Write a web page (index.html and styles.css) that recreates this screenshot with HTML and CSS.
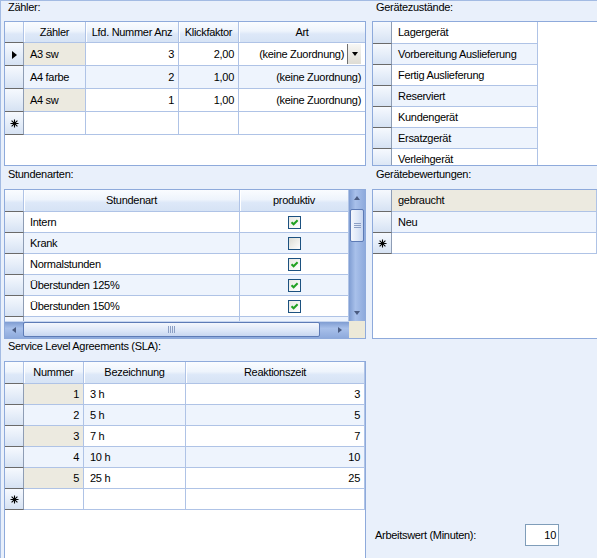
FILE: index.html
```html
<!DOCTYPE html>
<html lang="de">
<head>
<meta charset="utf-8">
<title>Einstellungen</title>
<link rel="stylesheet" href="styles.css">
</head>
<body>
<div class="page">

  <section class="sec sec-r1">
    <div class="label">Zähler:</div>
    <div class="box box-zaehler">
      <table class="grid">
        <colgroup><col class="w19"><col class="w62"><col class="w93"><col class="w60"><col class="w126"></colgroup>
        <tr class="hdr h21"><th class="corner-h"></th><th>Zähler</th><th>Lfd. Nummer Anz</th><th>Klickfaktor</th><th class="last">Art</th></tr>
        <tr class="h23"><td class="rh"><span class="cur"></span></td><td class="ro">A3 sw</td><td class="num">3</td><td class="num">2,00</td><td class="last combo-cell"><div class="combo"><span>(keine Zuordnung)</span><span class="dd"><span class="dd-arrow"></span></span></div></td></tr>
        <tr class="h23 alt"><td class="rh"></td><td>A4 farbe</td><td class="num">2</td><td class="num">1,00</td><td class="num last">(keine Zuordnung)</td></tr>
        <tr class="h23"><td class="rh"></td><td class="ro">A4 sw</td><td class="num">1</td><td class="num">1,00</td><td class="num last">(keine Zuordnung)</td></tr>
        <tr class="h23"><td class="rh"><svg class="star" width="9" height="9" viewBox="0 0 9 9"><path d="M4.5 0.5V8.5M0.5 4.5H8.5M1.6 1.6L7.4 7.4M7.4 1.6L1.6 7.4" stroke="#000" stroke-width="1.1"/></svg></td><td></td><td></td><td></td><td class="last"></td></tr>
      </table>
    </div>
  </section>

  <section class="sec sec-r1">
    <div class="label">Gerätezustände:</div>
    <div class="box box-open">
      <table class="grid grid-full">
        <colgroup><col class="w19"><col class="w146"><col></colgroup>
        <tr class="h22"><td class="rh"></td><td>Lagergerät</td><td class="fill"></td></tr>
        <tr class="h21 alt"><td class="rh"></td><td>Vorbereitung Auslieferung</td><td class="fill"></td></tr>
        <tr class="h21"><td class="rh"></td><td>Fertig Auslieferung</td><td class="fill"></td></tr>
        <tr class="h21 alt"><td class="rh"></td><td>Reserviert</td><td class="fill"></td></tr>
        <tr class="h21"><td class="rh"></td><td>Kundengerät</td><td class="fill"></td></tr>
        <tr class="h21 alt"><td class="rh"></td><td>Ersatzgerät</td><td class="fill"></td></tr>
        <tr class="h21"><td class="rh"></td><td>Verleihgerät</td><td class="fill"></td></tr>
      </table>
    </div>
  </section>

  <section class="sec sec-r2">
    <div class="label">Stundenarten:</div>
    <div class="box sbox">
      <div class="sview">
        <table class="grid">
          <colgroup><col class="w19"><col class="w216"><col class="w109"></colgroup>
          <tr class="hdr h22"><th class="corner-h"></th><th>Stundenart</th><th>produktiv</th></tr>
          <tr class="h21"><td class="rh"></td><td>Intern</td><td class="ctr"><span class="cb on"><svg width="11" height="11" viewBox="0 0 11 11"><path d="M2.5 5.2L4.6 7.3L8.6 3.2" fill="none" stroke="#21A121" stroke-width="2"/></svg></span></td></tr>
          <tr class="h21 alt"><td class="rh"></td><td>Krank</td><td class="ctr"><span class="cb off"></span></td></tr>
          <tr class="h21"><td class="rh"></td><td>Normalstunden</td><td class="ctr"><span class="cb on"><svg width="11" height="11" viewBox="0 0 11 11"><path d="M2.5 5.2L4.6 7.3L8.6 3.2" fill="none" stroke="#21A121" stroke-width="2"/></svg></span></td></tr>
          <tr class="h21 alt"><td class="rh"></td><td>Überstunden 125%</td><td class="ctr"><span class="cb on"><svg width="11" height="11" viewBox="0 0 11 11"><path d="M2.5 5.2L4.6 7.3L8.6 3.2" fill="none" stroke="#21A121" stroke-width="2"/></svg></span></td></tr>
          <tr class="h21"><td class="rh"></td><td>Überstunden 150%</td><td class="ctr"><span class="cb on"><svg width="11" height="11" viewBox="0 0 11 11"><path d="M2.5 5.2L4.6 7.3L8.6 3.2" fill="none" stroke="#21A121" stroke-width="2"/></svg></span></td></tr>
          <tr class="h21 alt"><td class="rh"></td><td></td><td></td></tr>
        </table>
      </div>
      <div class="vscroll">
        <div class="sarrow"><span class="tri-up"></span></div>
        <div class="vthumb"><span class="grip-h"></span></div>
        <div class="vtrack"></div>
        <div class="sarrow"><span class="tri-down"></span></div>
      </div>
      <div class="hscroll">
        <div class="harrow"><span class="tri-left"></span></div>
        <div class="hthumb"><span class="grip-v"></span></div>
        <div class="htrack"></div>
        <div class="harrow"><span class="tri-right"></span></div>
      </div>
      <div class="scorner"></div>
    </div>
  </section>

  <section class="sec sec-r2">
    <div class="label">Gerätebewertungen:</div>
    <div class="box box-open box-r2">
      <table class="grid grid-full">
        <colgroup><col class="w19"><col></colgroup>
        <tr class="h22"><td class="rh"></td><td class="ro">gebraucht</td></tr>
        <tr class="h21 alt"><td class="rh"></td><td>Neu</td></tr>
        <tr class="h21"><td class="rh"><svg class="star" width="9" height="9" viewBox="0 0 9 9"><path d="M4.5 0.5V8.5M0.5 4.5H8.5M1.6 1.6L7.4 7.4M7.4 1.6L1.6 7.4" stroke="#000" stroke-width="1.1"/></svg></td><td></td></tr>
      </table>
    </div>
  </section>

  <section class="sec sec-r3">
    <div class="label">Service Level Agreements (SLA):</div>
    <div class="box box-sla">
      <table class="grid">
        <colgroup><col class="w19"><col class="w60"><col class="w102"><col class="w179"></colgroup>
        <tr class="hdr h22"><th class="corner-h"></th><th>Nummer</th><th>Bezeichnung</th><th>Reaktionszeit</th></tr>
        <tr class="h21"><td class="rh"></td><td class="num ro">1</td><td>3 h</td><td class="num">3</td></tr>
        <tr class="h21 alt"><td class="rh"></td><td class="num">2</td><td>5 h</td><td class="num">5</td></tr>
        <tr class="h21"><td class="rh"></td><td class="num ro">3</td><td>7 h</td><td class="num">7</td></tr>
        <tr class="h21 alt"><td class="rh"></td><td class="num">4</td><td>10 h</td><td class="num">10</td></tr>
        <tr class="h21"><td class="rh"></td><td class="num ro">5</td><td>25 h</td><td class="num">25</td></tr>
        <tr class="h21"><td class="rh"><svg class="star" width="9" height="9" viewBox="0 0 9 9"><path d="M4.5 0.5V8.5M0.5 4.5H8.5M1.6 1.6L7.4 7.4M7.4 1.6L1.6 7.4" stroke="#000" stroke-width="1.1"/></svg></td><td></td><td></td><td></td></tr>
      </table>
    </div>
  </section>

  <section class="sec sec-r3 sec-arbeit">
    <div class="field">
      <span class="field-label">Arbeitswert (Minuten):</span>
      <span class="input">10</span>
    </div>
  </section>

</div>
</body>
</html>
```

FILE: styles.css
```css
* { box-sizing: border-box; }
html, body { margin: 0; padding: 0; }
body {
  width: 597px;
  height: 558px;
  overflow: hidden;
  background: #E9F0FB;
  font-family: "Liberation Sans", Arial, sans-serif;
  font-size: 11px;
  letter-spacing: -0.3px;
  color: #000;
}
.page {
  height: 558px;
  border-top: 1px solid #A3BBE3;
  border-left: 1px solid #A3BBE3;
  padding-left: 3px;
  display: grid;
  grid-template-columns: 362px 225px;
  column-gap: 6px;
  grid-template-rows: 165px 173px 1fr;
  overflow: hidden;
}
.sec { display: flex; flex-direction: column; min-height: 0; min-width: 0; }
.label {
  line-height: 13px;
  padding-left: 4px;
  white-space: nowrap;
  flex: none;
}
.sec-r1 .label { height: 20px; padding-top: 0; }
.sec-r2 .label { height: 23px; padding-top: 2px; }
.sec-r3 .label { height: 22px; padding-top: 1px; }

.box {
  background: #fff;
  border: 1px solid #8EAADB;
  overflow: hidden;
  flex: none;
}
.sec-r1 .box { height: 145px; }
.sec-r2 .box { height: 150px; }
.box-sla { height: 230px; }
.box-open { border-right: none; }

/* grid tables */
.grid {
  border-collapse: separate;
  border-spacing: 0;
  table-layout: fixed;
}
.grid-full { width: 100%; }
.w19 { width: 19px; }
.w60 { width: 60px; }
.w62 { width: 62px; }
.w93 { width: 93px; }
.w102 { width: 102px; }
.w109 { width: 109px; }
.w126 { width: 126px; }
.w146 { width: 146px; }
.w179 { width: 179px; }
.w216 { width: 216px; }

.h21 { height: 21px; }
.h22 { height: 22px; }
.h23 { height: 23px; }

.grid td, .grid th {
  border-right: 1px solid #AFC3E6;
  border-bottom: 1px solid #AFC3E6;
  padding: 0 4px 0 6px;
  white-space: nowrap;
  overflow: hidden;
  font-weight: normal;
  text-align: left;
  vertical-align: middle;
  line-height: 13px;
}
.grid th {
  text-align: center;
  padding: 0 2px;
  background: linear-gradient(#FAFCFF 0%, #EEF4FC 45%, #DDE8F8 60%, #D6E3F5 100%);
  box-shadow: inset 1px 0 0 #FFFFFF;
}
.grid th.corner-h { box-shadow: none; }
.grid .last { border-right: none; }
.grid .num { text-align: right; }
.grid .ctr { text-align: center; padding: 0; }
.grid td.fill { border: none; background: #fff; }
.grid tr.alt td { background: #EEF4FD; }
.grid td.ro { background: #ECEAE0; }
.grid tr.alt td.fill { background: #fff; }
.grid td.rh {
  padding: 0;
  text-align: center;
  background: linear-gradient(#F6F9FE 0%, #E6EEF9 50%, #D6E2F3 100%);
  border-right: 1px solid #8E9DB5;
  border-bottom: 1px solid #6A6A6A;
}
.grid tr.alt td.rh { background: linear-gradient(#F6F9FE 0%, #E6EEF9 50%, #D6E2F3 100%); }
.grid th.corner-h { border-right: 1px solid #AFC3E6; border-bottom: 1px solid #6A6A6A; }

.cur {
  display: inline-block;
  width: 0; height: 0;
  border-top: 4px solid transparent;
  border-bottom: 4px solid transparent;
  border-left: 5px solid #000;
  vertical-align: middle;
  margin-left: 1px;
}
.star { display: block; margin: 0 auto; }

/* combobox editor */
.grid td.combo-cell { padding: 0 4px 0 0; }
.combo {
  display: flex;
  justify-content: flex-end;
  align-items: center;
  height: 22px;
}
.dd {
  margin-left: 3px;
  width: 14px;
  height: 20px;
  border-left: 1px solid #6F6F6F;
  background: linear-gradient(#F7F7F5, #DEDCD4);
  display: flex;
  align-items: center;
  justify-content: center;
}
.dd-arrow {
  width: 0; height: 0;
  border-left: 3.5px solid transparent;
  border-right: 3.5px solid transparent;
  border-top: 4px solid #000;
}

/* checkboxes */
.cb {
  display: inline-block;
  width: 13px;
  height: 13px;
  border: 1px solid #1C5180;
  background: linear-gradient(135deg, #E8E8E2, #FFFFFF);
  vertical-align: middle;
}
.cb svg { display: block; }
.cb.off { background: linear-gradient(135deg, #DCDCD4, #FFFFFF); }

/* scrolling grid */
.sbox {
  display: grid;
  grid-template-columns: 1fr 16px;
  grid-template-rows: 1fr 17px;
}
.sview { overflow: hidden; min-height: 0; background: #fff; }
.vscroll {
  display: flex;
  flex-direction: column;
  background: linear-gradient(to right, #7F9DD2, #A8C0EA 40%, #8EAADC);
  min-height: 0;
}
.sarrow {
  height: 16px;
  flex: none;
  display: flex;
  align-items: center;
  justify-content: center;
}
.vtrack { flex: 1; }
.vthumb {
  flex: none;
  margin: 3px 1px 0;
  height: 33px;
  border: 1px solid #5D7BB6;
  border-radius: 2px;
  background: linear-gradient(to right, #F4F7FD, #DCE6F7 60%, #C7D6F0);
  display: flex;
  align-items: center;
  justify-content: center;
}
.grip-h {
  width: 7px;
  height: 5px;
  border-top: 1px solid #8C9FC4;
  border-bottom: 1px solid #8C9FC4;
  position: relative;
}
.grip-h::after {
  content: "";
  position: absolute;
  left: 0; right: 0; top: 1px;
  border-top: 1px solid #8C9FC4;
}
.tri-up, .tri-down, .tri-left, .tri-right { width: 0; height: 0; }
.tri-up { border-left: 3.5px solid transparent; border-right: 3.5px solid transparent; border-bottom: 4px solid #4A5B80; }
.tri-down { border-left: 3.5px solid transparent; border-right: 3.5px solid transparent; border-top: 4px solid #4A5B80; }
.tri-left { border-top: 3.5px solid transparent; border-bottom: 3.5px solid transparent; border-right: 4px solid #4A5B80; }
.tri-right { border-top: 3.5px solid transparent; border-bottom: 3.5px solid transparent; border-left: 4px solid #4A5B80; }

.hscroll {
  display: flex;
  background: linear-gradient(#7F9DD2, #A8C0EA 40%, #8EAADC);
  border-top: 1px solid #C7D6F0;
}
.harrow {
  width: 18px;
  flex: none;
  display: flex;
  align-items: center;
  justify-content: center;
}
.hthumb {
  width: 297px;
  flex: none;
  margin: 0 0 1px;
  border: 1px solid #5D7BB6;
  border-radius: 2px;
  background: linear-gradient(#F4F7FD, #DCE6F7 60%, #C7D6F0);
  display: flex;
  align-items: center;
  justify-content: center;
}
.grip-v {
  width: 7px;
  height: 7px;
  background: repeating-linear-gradient(to right, #8C9FC4 0 1px, transparent 1px 2px);
}
.htrack { flex: 1; }
.scorner { background: #ECE9D8; }

/* Arbeitswert */
.sec-arbeit { justify-content: flex-end; }
.field {
  display: flex;
  align-items: center;
  padding: 0 0 12px 3px;
}
.field-label { width: 150px; white-space: nowrap; }
.input {
  width: 34px;
  height: 22px;
  border: 1px solid #7F9DB9;
  background: #fff;
  text-align: right;
  padding-right: 2px;
  line-height: 20px;
}
```
